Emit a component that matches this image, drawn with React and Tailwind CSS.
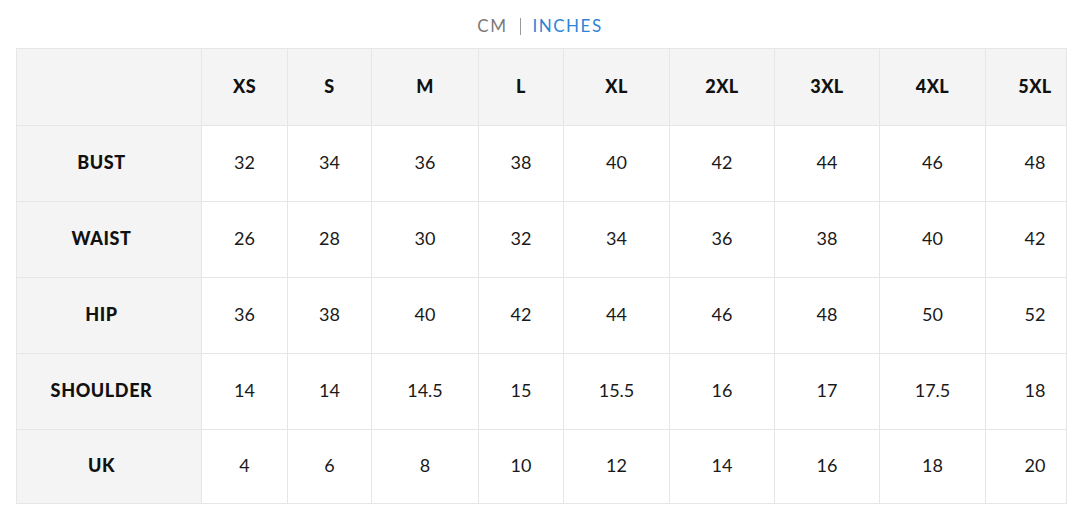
const sizes = ["XS", "S", "M", "L", "XL", "2XL", "3XL", "4XL", "5XL"];
const widths = [185, 86, 84, 107, 85, 106, 105, 105, 106, 81];

const rows = [
  { label: "BUST", values: ["32", "34", "36", "38", "40", "42", "44", "46", "48"] },
  { label: "WAIST", values: ["26", "28", "30", "32", "34", "36", "38", "40", "42"] },
  { label: "HIP", values: ["36", "38", "40", "42", "44", "46", "48", "50", "52"] },
  { label: "SHOULDER", values: ["14", "14", "14.5", "15", "15.5", "16", "17", "17.5", "18"] },
  { label: "UK", values: ["4", "6", "8", "10", "12", "14", "16", "18", "20"] },
];

export default function App() {
  return (
    <div className="w-[1080px] h-[505px] bg-white overflow-hidden" style={{ fontFamily: "Lato, 'Noto Sans', sans-serif" }}>
      {/* Unit toggle */}
      <div className="h-[48px] flex items-center justify-center pt-[4px] text-[17px] tracking-[1.5px]">
        <span className="text-[#7a7a7a]">CM</span>
        <span className="mx-[12px] w-px h-[17px] bg-[#9a9a9a]" />
        <span className="text-[#2f84d4]">INCHES</span>
      </div>

      <table className="ml-[16px] table-fixed border-collapse w-[1050px] text-[#111]">
        <colgroup>
          {widths.map((w, i) => (
            <col key={i} style={{ width: w }} />
          ))}
        </colgroup>
        <thead>
          <tr className="h-[77px] bg-[#f4f4f4]">
            <th className="border border-[#e6e6e6]" />
            {sizes.map((s, i) => (
              <th
                key={s}
                className={`border border-[#e6e6e6] pb-[2px] text-[18px] font-black tracking-[0.4px] text-center ${i === sizes.length - 1 ? "pl-[18px]" : ""}`}
              >
                {s}
              </th>
            ))}
          </tr>
        </thead>
        <tbody>
          {rows.map((r, ri) => (
            <tr key={r.label} className={ri === rows.length - 1 ? "h-[74px]" : "h-[76px]"}>
              <td className="border border-[#e6e6e6] bg-[#f4f4f4] pb-[2px] text-[18px] font-black tracking-[0.6px] text-center pr-[15px]">
                {r.label}
              </td>
              {r.values.map((v, i) => (
                <td
                  key={i}
                  className={`border border-[#e6e6e6] pb-[2px] text-[18px] text-center text-[#1a1a1a] ${i === r.values.length - 1 ? "pl-[18px]" : ""}`}
                >
                  {v}
                </td>
              ))}
            </tr>
          ))}
        </tbody>
      </table>
    </div>
  );
}
